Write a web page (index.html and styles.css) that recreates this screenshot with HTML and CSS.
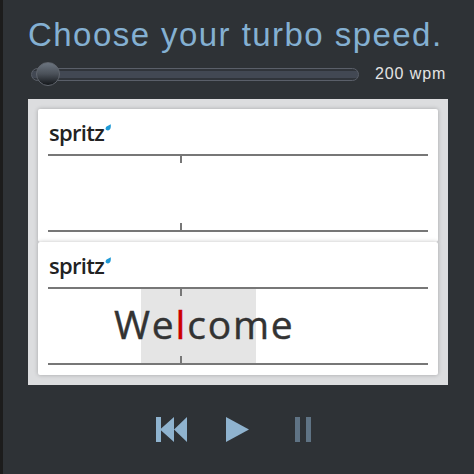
FILE: index.html
```html
<!doctype html>
<html>
<head>
<meta charset="utf-8">
<title>Choose your turbo speed</title>
<link rel="stylesheet" href="styles.css">
</head>

<body>
<div class="wrap">
	<h1 class="title">Choose your turbo speed.</h1>
	<div class="speed">
		<div class="slider">
			<span class="knob"></span>
		</div>
		<span class="wpm">200 wpm</span>
	</div>
	<div class="demo">
		<div class="card">
			<div class="logo">spritz<svg class="drop" width="6" height="7" viewBox="0 0 6 7"><path d="M5.8 0.2 C6 3 5.6 6.4 2.8 6.4 C0.2 6.4 0 4 1.6 2.6 Z" fill="#1f9ad6"/></svg></div>
			<div class="reticle"></div>
		</div>
		<div class="card">
			<div class="logo">spritz<svg class="drop" width="6" height="7" viewBox="0 0 6 7"><path d="M5.8 0.2 C6 3 5.6 6.4 2.8 6.4 C0.2 6.4 0 4 1.6 2.6 Z" fill="#1f9ad6"/></svg></div>
			<div class="reticle">
				<span class="focus"></span>
				<span class="word">We<b>l</b>come</span>
			</div>
		</div>
	</div>
	<div class="controls">
		<svg class="rewind" width="32" height="25" viewBox="0 0 32 25"><path d="M0 0H5V25H0Z M4 12.5L18 0V25Z M18 12.5L31 0V25Z" fill="#8fb3cf"/></svg>
		<svg class="play" width="24" height="25" viewBox="0 0 24 25"><path d="M0 0L23 12.5L0 25Z" fill="#8fb3cf"/></svg>
		<svg class="pause" width="16" height="25" viewBox="0 0 16 25"><path d="M0 0H5V25H0Z M11 0H16V25H11Z" fill="#5f7384"/></svg>
	</div>
</div>
</body>
</html>
```

FILE: styles.css
```css
body,h1{margin:0;padding:0;}
html,body{height:100%;}
body{background:#1c1c1c;font-family:"Liberation Sans",Arial,sans-serif;overflow:hidden;}

.wrap{height:474px;margin-left:3px;padding:0 25px;background:#2e3236;box-sizing:border-box;}
.title{height:55px;padding-top:15px;box-sizing:border-box;font-size:33px;line-height:40px;font-weight:normal;letter-spacing:1.45px;color:#84b0d2;white-space:nowrap;}

.speed{display:flex;align-items:center;height:38px;margin-bottom:6px;padding-left:3px;}
.slider{width:326px;height:11px;border:1px solid #5a5f69;border-radius:7px;background:linear-gradient(#30343a 0,#30343a 20%,#424853 20%,#424853 80%,#30343a 80%);position:relative;}
.knob{position:absolute;left:4px;top:-7px;width:22px;height:22px;border:1px solid #60656d;border-radius:50%;background:linear-gradient(#6c7580,#4a5058 50%,#14171b);}
.wpm{margin-left:16px;font-size:16px;letter-spacing:.9px;color:#e4e4e4;white-space:nowrap;}

.demo{width:420px;height:286px;padding:10px;box-sizing:border-box;background:#dcdddf;}
.card{height:133px;padding:0 10px;background:#fff;border-radius:2px;box-shadow:0 0 4px rgba(0,0,0,.25);position:relative;}
.logo{display:flex;height:45px;padding:0 1px;align-items:center;font-family:"Open Sans",sans-serif;font-size:22px;font-weight:600;letter-spacing:-.7px;color:#222;box-sizing:border-box;}
.drop{margin:-9px 0 0 1px;}

.reticle{height:74px;border-top:2px solid #777;border-bottom:2px solid #777;position:relative;}
.reticle:before,.reticle:after{content:'';position:absolute;left:132px;width:2px;height:7px;background:#777;z-index:2;}
.reticle:before{top:0;}
.reticle:after{bottom:0;}
.focus{position:absolute;left:93px;top:0;width:115px;height:74px;background:#e5e5e5;}
.word{position:absolute;left:66px;top:10px;font-family:"Open Sans",sans-serif;font-size:39px;line-height:50px;letter-spacing:1.8px;color:#333;-webkit-text-stroke:.4px;white-space:nowrap;}
.word b{font-weight:normal;color:#c00;}

.controls{display:flex;align-items:center;height:89px;padding-left:128px;}
.play{margin-left:38px;}
.pause{margin-left:45px;}
```
